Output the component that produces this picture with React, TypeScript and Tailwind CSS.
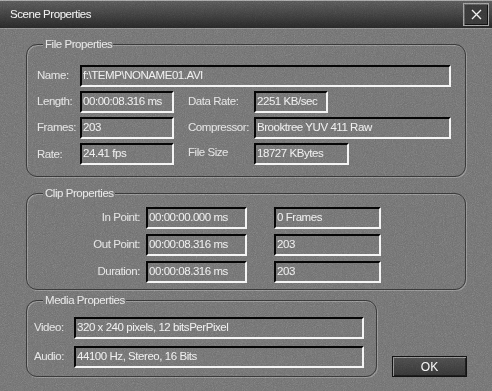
import React from "react";

const font = { fontFamily: "'Liberation Sans', Arial, sans-serif" };

function Field({ w, children }: { w: string; children?: React.ReactNode }) {
  return (
    <div
      className={`${w} h-[22px] shrink-0 flex items-center pl-[1px] border-2 border-t-[#050505] border-l-[#050505] border-b-[#f4f4f4] border-r-[#f4f4f4] text-[#eeeeee] whitespace-nowrap overflow-hidden`}
    >
      {children}
    </div>
  );
}

function Group({
  title,
  className,
  children,
}: {
  title: string;
  className: string;
  children: React.ReactNode;
}) {
  return (
    <div
      className={`relative rounded-[11px] border border-[#353535] shadow-[inset_1px_1px_0_#8e8e8e,1px_1px_0_#8e8e8e] ${className}`}
    >
      <span className="absolute -top-[7px] left-[16px] pl-[2px] pr-[1px] leading-[13px] bg-[#6e6e6e] text-[#e6e6e6]">
        {title}
      </span>
      {children}
    </div>
  );
}

export default function App() {
  return (
    <div
      className="relative w-[492px] h-[391px] overflow-hidden bg-[#6e6e6e] text-[11.5px] tracking-[-0.45px] text-[#e2e2e2]"
      style={font}
    >
      {/* Title bar */}
      <div className="h-[29px] flex items-center justify-between border-t border-t-[#a0a0a0] border-b border-b-[#8a8a8a] bg-gradient-to-b from-[#555555] via-[#3e3e3e] to-[#262626] pl-[10px] pr-[3px]">
        <span className="text-[#f0f0f0]">Scene Properties</span>
        <button className="w-[26px] h-[23px] flex items-center justify-center bg-[#363636] border border-[#9a9a9a] shadow-[inset_1px_1px_0_#5a5a5a,inset_-1px_-1px_0_#111]">
          <svg width="11" height="11" viewBox="0 0 11 11">
            <path d="M1 1L10 10M10 1L1 10" stroke="#f2f2f2" strokeWidth="1.2" />
          </svg>
        </button>
      </div>

      <div className="pl-[26px] pt-[15px]">
        {/* File Properties */}
        <Group title="File Properties" className="w-[440px] h-[133px] pl-[10px] pt-[20px]">
          <div className="flex flex-col gap-[4px]">
            <div className="flex items-center">
              <span className="w-[43px]">Name:</span>
              <Field w="w-[371px]">f:\TEMP\NONAME01.AVI</Field>
            </div>
            <div className="flex items-center">
              <span className="w-[43px]">Length:</span>
              <Field w="w-[94px]">00:00:08.316 ms</Field>
              <span className="w-[66px] ml-[14px]">Data Rate:</span>
              <Field w="w-[74px]">2251 KB/sec</Field>
            </div>
            <div className="flex items-center">
              <span className="w-[43px]">Frames:</span>
              <Field w="w-[94px]">203</Field>
              <span className="w-[66px] ml-[14px]">Compressor:</span>
              <Field w="w-[197px]">Brooktree YUV 411 Raw</Field>
            </div>
            <div className="flex items-center">
              <span className="w-[43px] pt-[2px]">Rate:</span>
              <Field w="w-[94px]">24.41 fps</Field>
              <span className="w-[66px] ml-[14px] pb-[2px]">File Size</span>
              <Field w="w-[95px]">18727 KBytes</Field>
            </div>
          </div>
        </Group>

        {/* Clip Properties */}
        <Group title="Clip Properties" className="mt-[16px] w-[440px] h-[97px] pt-[13px]">
          <div className="flex flex-col gap-[5px]">
            {[
              ["In Point:", "00:00:00.000 ms", "0 Frames"],
              ["Out Point:", "00:00:08.316 ms", "203"],
              ["Duration:", "00:00:08.316 ms", "203"],
            ].map(([label, a, b]) => (
              <div key={label} className="flex items-center">
                <span className="w-[113px] text-right">{label}</span>
                <div className="ml-[6px]">
                  <Field w="w-[101px]">{a}</Field>
                </div>
                <div className="ml-[27px]">
                  <Field w="w-[107px]">{b}</Field>
                </div>
              </div>
            ))}
          </div>
        </Group>

        {/* Media Properties + OK */}
        <div className="mt-[10px] flex items-end">
          <Group title="Media Properties" className="w-[351px] h-[77px] pl-[7px] pt-[16px]">
            <div className="flex flex-col gap-[7px]">
              <div className="flex items-center">
                <span className="w-[40px]">Video:</span>
                <Field w="w-[290px]">320 x 240 pixels, 12 bitsPerPixel</Field>
              </div>
              <div className="flex items-center">
                <span className="w-[40px]">Audio:</span>
                <Field w="w-[290px]">44100 Hz, Stereo, 16 Bits</Field>
              </div>
            </div>
          </Group>
          <button className="ml-[15px] w-[75px] h-[21px] flex items-center justify-center bg-gradient-to-b from-[#4a4a4a] to-[#333333] border border-[#111111] shadow-[inset_1px_1px_0_#8a8a8a,inset_-1px_-1px_0_#1c1c1c] text-[12px] tracking-normal text-[#f4f4f4]">
            OK
          </button>
        </div>
      </div>

      {/* stucco texture over the whole window */}
      <svg className="absolute inset-0 pointer-events-none opacity-[0.45] mix-blend-overlay" width="492" height="391">
        <filter id="grain">
          <feTurbulence type="fractalNoise" baseFrequency="1.1" numOctaves="2" seed="3" />
          <feColorMatrix type="saturate" values="0" />
        </filter>
        <rect width="492" height="391" filter="url(#grain)" />
      </svg>
    </div>
  );
}
